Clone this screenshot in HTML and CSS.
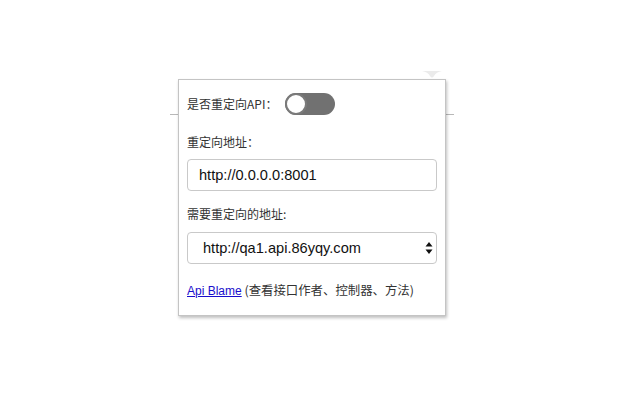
FILE: index.html
```html
<!DOCTYPE html>
<html>
<head>
<meta charset="utf-8">
<link rel="stylesheet" href="styles.css">
</head>
<body>
<div class="stage">
  <div class="backline"></div>
  <svg class="notch" width="20" height="8" viewBox="0 0 20 8"><path d="M0 0 H20 Q14 1 12 5 Q10 8 8 5 Q6 1 0 0 Z" fill="#ebebeb"/></svg>
  <div class="popup">
    <div class="row">
      <span class="label">是否重定向API：</span>
      <span class="toggle"><span class="knob"></span></span>
    </div>
    <div class="label block first">重定向地址：</div>
    <div class="field">http://0.0.0.0:8001</div>
    <div class="label block">需要重定向的地址:</div>
    <div class="field select">
      <span class="seltext">http://qa1.api.86yqy.com</span>
      <svg class="arrows" width="8" height="12" viewBox="0 0 8 12"><path d="M4 0 L7.5 4.5 H0.5 Z M4 12 L7.5 7.5 H0.5 Z" fill="#111"/></svg>
    </div>
    <div class="foot"><a href="#" class="link">Api Blame</a> (查看接口作者、控制器、方法)</div>
  </div>
</div>
</body>
</html>
```
FILE: styles.css
```css
html, body {
  margin: 0;
  padding: 0;
  background: #fff;
}
body {
  font-family: "Noto Sans CJK SC", "Liberation Sans", sans-serif;
}
.stage {
  position: relative;
  width: 640px;
  height: 400px;
  padding: 79px 0 0 178px;
  box-sizing: border-box;
}
.backline {
  position: absolute;
  left: 170px;
  top: 114px;
  width: 284px;
  height: 1px;
  background: #b8b8b8;
}
.notch {
  position: absolute;
  left: 422px;
  top: 71px;
}
.popup {
  position: relative;
  z-index: 1;
  background: #fff;
  border: 1px solid #c4c4c4;
  box-shadow: 1px 2px 3px rgba(0,0,0,0.25);
  padding: 12px 8px 16px 8px;
  box-sizing: content-box;
  width: 250px;
}
.row {
  display: flex;
  align-items: center;
  height: 24px;
  gap: 8px;
}
.label {
  font-size: 12px;
  line-height: 16px;
  color: #333;
}
.block {
  display: block;
  margin-top: 15px;
  margin-bottom: 10px;
}
.first {
  margin-top: 18px;
  margin-bottom: 9px;
}
.toggle {
  position: relative;
  display: block;
  width: 50px;
  height: 22px;
  border-radius: 11px;
  background: #717171;
}
.knob {
  position: absolute;
  left: 0;
  top: 0;
  width: 18px;
  height: 18px;
  border-radius: 50%;
  background: #fff;
  border: 2px solid #7a7a7a;
}
.field {
  height: 30px;
  border: 1px solid #c9c9c9;
  border-radius: 4px;
  display: flex;
  align-items: center;
  padding-left: 11px;
  font-family: "Liberation Sans", Arial, sans-serif;
  font-size: 14.6px;
  color: #111;
  box-sizing: content-box;
  width: 237px;
}
.select {
  justify-content: space-between;
  padding-left: 15px;
  width: 233px;
  padding-right: 0;
}
.seltext {
  display: block;
}
.arrows {
  margin-right: 3px;
}
.foot {
  margin-top: 18px;
  font-size: 12.4px;
  line-height: 16px;
  color: #333;
}
.link {
  color: #1a0dcc;
  text-decoration: underline;
  font-family: "Liberation Sans", "Noto Sans CJK SC", sans-serif;
  font-size: 12px;
}
```
